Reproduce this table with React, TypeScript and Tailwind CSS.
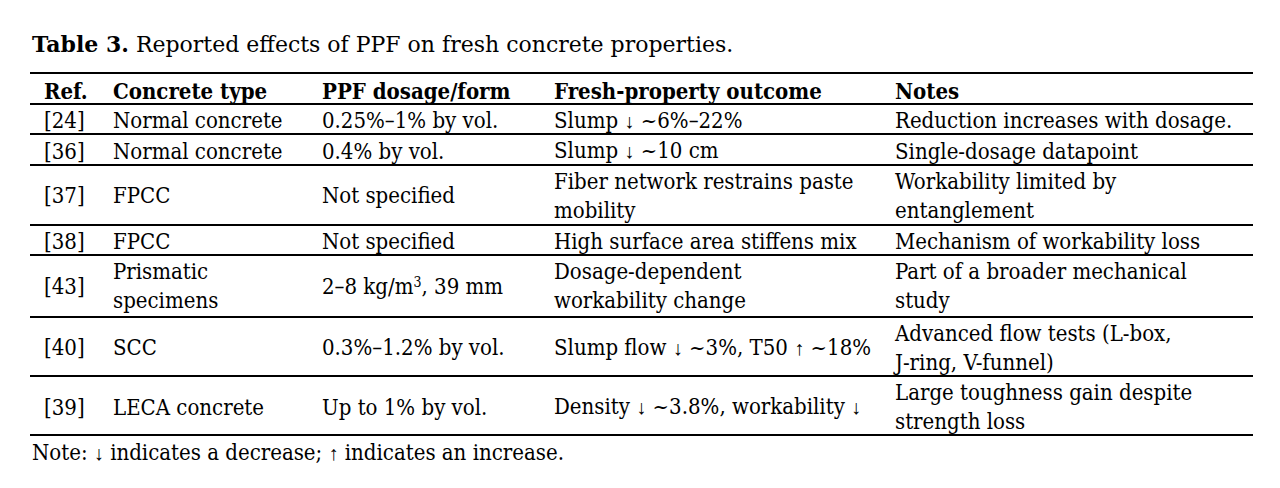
import React from "react";

type Row = {
  ref: string;
  type: React.ReactNode;
  dose: React.ReactNode;
  out: React.ReactNode;
  notes: React.ReactNode;
  h: string;
};

function Down() {
  return <span className="font-['Liberation_Serif',serif] text-[20px]">↓</span>;
}
function Up() {
  return <span className="font-['Liberation_Serif',serif] text-[20px]">↑</span>;
}

const rows: Row[] = [
  { ref: "[24]", type: "Normal concrete", dose: "0.25%–1% by vol.", out: (<>Slump <Down /> ~6%–22%</>), notes: "Reduction increases with dosage.", h: "h-[30.5px]" },
  { ref: "[36]", type: "Normal concrete", dose: "0.4% by vol.", out: (<>Slump <Down /> ~10 cm</>), notes: "Single-dosage datapoint", h: "h-[30.5px]" },
  {
    ref: "[37]",
    type: "FPCC",
    dose: "Not specified",
    out: (<>Fiber network restrains paste<br />mobility</>),
    notes: (<>Workability limited by<br />entanglement</>),
    h: "h-[60px]",
  },
  { ref: "[38]", type: "FPCC", dose: "Not specified", out: "High surface area stiffens mix", notes: "Mechanism of workability loss", h: "h-[30.5px]" },
  {
    ref: "[43]",
    type: (<>Prismatic<br />specimens</>),
    dose: (<>2–8 kg/m<sup className="text-[14px]">3</sup>, 39 mm</>),
    out: (<>Dosage-dependent<br />workability change</>),
    notes: (<>Part of a broader mechanical<br />study</>),
    h: "h-[61.5px]",
  },
  {
    ref: "[40]",
    type: "SCC",
    dose: "0.3%–1.2% by vol.",
    out: (<>Slump flow <Down /> ~3%, T50 <Up /> ~18%</>),
    notes: (<>Advanced flow tests (L-box,<br />J-ring, V-funnel)</>),
    h: "h-[59.5px]",
  },
  {
    ref: "[39]",
    type: "LECA concrete",
    dose: "Up to 1% by vol.",
    out: (<>Density <Down /> ~3.8%, workability <Down /></>),
    notes: (<>Large toughness gain despite<br />strength loss</>),
    h: "h-[59px]",
  },
];

const grid = "grid grid-cols-[71px_209px_232px_341px_370px] border-b-2 border-black";

function Cell({ children, first, head }: { children: React.ReactNode; first?: boolean; head?: boolean }) {
  return (
    <div className={`flex items-center whitespace-nowrap ${first ? "pl-[14px]" : "pl-[12px]"} ${head ? "pt-[3px]" : "pt-[1px]"}`}>
      <div>{children}</div>
    </div>
  );
}

export default function App() {
  return (
    <div className="w-[1280px] h-[488px] bg-white text-black text-[22px] leading-[29px] pl-[30px] pt-[30px] overflow-hidden">
      <div className="pl-[2px] font-['DejaVu_Serif',serif]">
        <span className="font-bold">Table 3.</span> Reported effects of PPF on fresh concrete properties.
      </div>
      <div className="mt-[13px] w-[1223px] border-t-2 border-black font-['DejaVu_Serif_Condensed','DejaVu_Serif',serif]">
        <div className={`${grid} h-[30.5px] font-bold`}>
          <Cell first head>Ref.</Cell>
          <Cell head>Concrete type</Cell>
          <Cell head>PPF dosage/form</Cell>
          <Cell head>Fresh-property outcome</Cell>
          <Cell head>Notes</Cell>
        </div>
        {rows.map((r) => (
          <div key={r.ref} className={`${grid} ${r.h}`}>
            <Cell first>{r.ref}</Cell>
            <Cell>{r.type}</Cell>
            <Cell>{r.dose}</Cell>
            <Cell>{r.out}</Cell>
            <Cell>{r.notes}</Cell>
          </div>
        ))}
      </div>
      <div className="pl-[2px] pt-[2px] font-['DejaVu_Serif_Condensed','DejaVu_Serif',serif]">
        Note: <Down /> indicates a decrease; <Up /> indicates an increase.
      </div>
    </div>
  );
}
